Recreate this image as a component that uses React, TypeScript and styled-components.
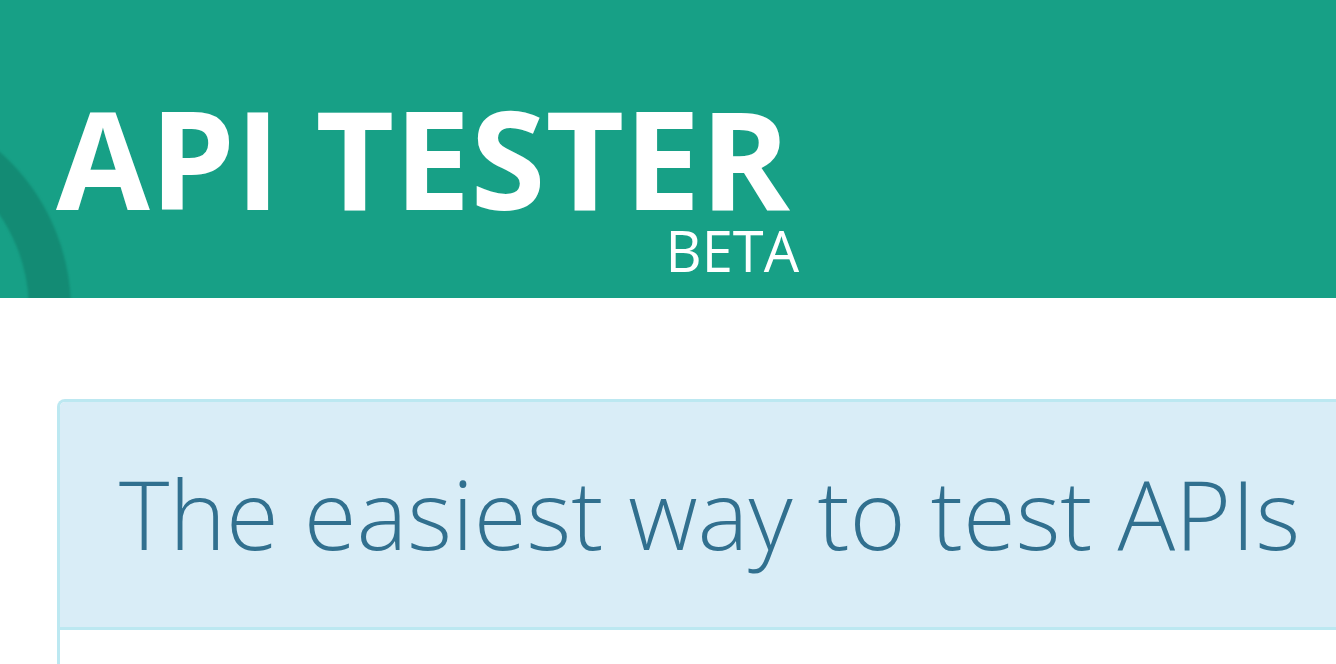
import React from "react";
import styled, { createGlobalStyle } from "styled-components";

const GlobalStyle = createGlobalStyle`
  html, body {
    margin: 0;
    padding: 0;
    background: #ffffff;
    overflow: hidden;
    font-family: "Open Sans", "Liberation Sans", sans-serif;
  }
`;

const Header = styled.header`
  position: relative;
  box-sizing: border-box;
  height: 298px;
  padding: 90px 0 0 56px;
  background: #17a086;
  overflow: hidden;
  display: flex;
  align-items: flex-start;
`;

const Ring = styled.div`
  position: absolute;
  left: -351px;
  top: 99px;
  width: 338px;
  height: 338px;
  border: 42px solid #138b74;
  border-radius: 50%;
  filter: blur(1px);
`;

const TitleBlock = styled.div`
  position: relative;
  display: inline-flex;
  flex-direction: column;
  align-items: flex-end;
`;

const Title = styled.h1`
  margin: 0;
  font-family: "Open Sans", "Liberation Sans", sans-serif;
  font-weight: 700;
  font-size: 136px;
  line-height: 1;
  color: #ffffff;
  white-space: nowrap;
`;

const Beta = styled.span`
  margin-top: -4px;
  margin-right: -9px;
  font-family: "Open Sans", "Liberation Sans", sans-serif;
  font-weight: 400;
  font-size: 56px;
  line-height: 1;
  color: #ffffff;
`;

const Main = styled.main`
  padding: 101px 0 0 57px;
`;

const Panel = styled.section`
  width: 1400px;
  border: 3px solid #bce8f1;
  border-bottom: none;
  border-radius: 8px 8px 0 0;
  overflow: hidden;
`;

const PanelHeading = styled.div`
  box-sizing: border-box;
  height: 228px;
  padding: 63px 0 0 59px;
  background: #d9edf7;
  border-bottom: 3px solid #bce8f1;
`;

const Tagline = styled.h2`
  margin: 0;
  font-family: "Open Sans", "Liberation Sans", sans-serif;
  font-weight: 300;
  font-size: 96px;
  line-height: 1;
  color: #31708f;
  white-space: nowrap;
`;

const PanelBody = styled.div`
  height: 200px;
  background: #ffffff;
`;

export default function App() {
  return (
    <>
      <GlobalStyle />
      <Header>
        <Ring />
        <TitleBlock>
          <Title>API TESTER</Title>
          <Beta>BETA</Beta>
        </TitleBlock>
      </Header>
      <Main>
        <Panel>
          <PanelHeading>
            <Tagline>The easiest way to test APIs</Tagline>
          </PanelHeading>
          <PanelBody />
        </Panel>
      </Main>
    </>
  );
}
